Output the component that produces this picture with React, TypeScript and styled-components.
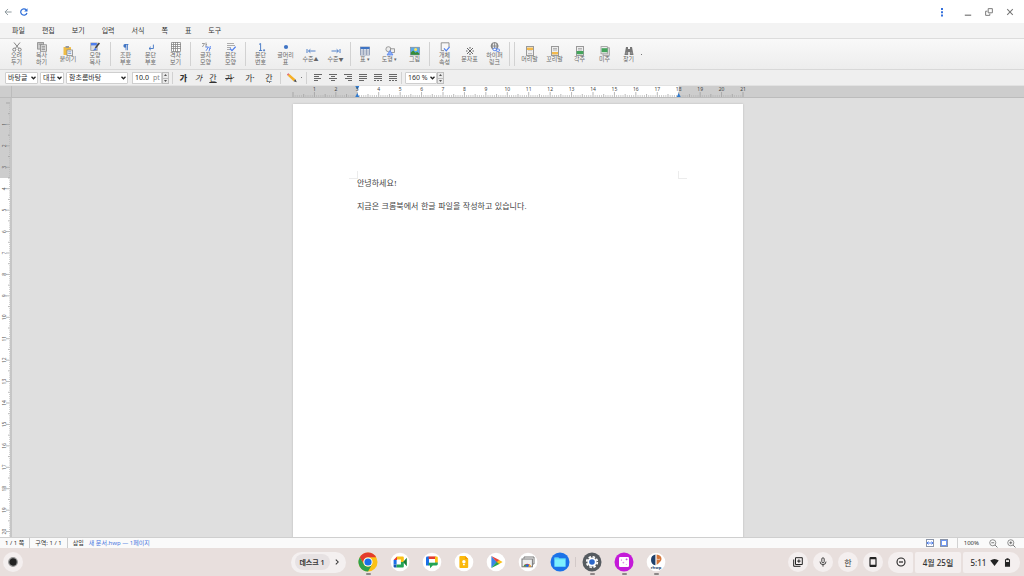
import React from 'react';
import styled, { createGlobalStyle, css } from 'styled-components';

const GlobalStyle = createGlobalStyle`
  * { box-sizing: border-box; }
  body { margin: 0; background: #dfdfdf; }
  button, input, select { font: inherit; color: inherit; margin: 0; }
  button { border: 0; padding: 0; background: none; cursor: pointer; }
  svg { display: block; flex: none; }
`;

const Shell = styled.div`
  display: flex;
  flex-direction: column;
  height: 100vh;
  overflow: hidden;
  font-family: 'Noto Sans', 'Noto Sans CJK KR', sans-serif;
  font-size: 7px;
  color: #333;
`;

/* ---------- window frame ---------- */

const TitleBar = styled.header`
  display: flex;
  justify-content: space-between;
  align-items: center;
  height: 23px;
  flex: none;
  padding: 0 8px 0 2px;
  background: #fff;
`;

const TitleGroup = styled.div<{ $gap: number }>`
  display: flex;
  align-items: center;
  gap: ${(p) => p.$gap}px;
`;

const TitleButton = styled.button`
  display: grid;
  place-items: center;
  width: 12px;
  height: 12px;
`;

const WindowButtons = styled(TitleGroup)`
  margin-left: 5px;
`;

const MenuBar = styled.nav`
  display: flex;
  align-items: center;
  height: 16px;
  flex: none;
  padding-left: 4px;
  background: #f3f3f3;
  border-bottom: 1px solid #dcdcdc;
`;

const MenuItem = styled.button`
  padding: 0 8px;
  margin-right: 1px;
  line-height: 14px;
`;

/* ---------- main toolbar ---------- */

const ToolBar = styled.div`
  display: flex;
  align-items: center;
  height: 31px;
  flex: none;
  padding-left: 4px;
  background: linear-gradient(#f9f9f9, #ededed);
  border-bottom: 1px solid #d8d8d8;
`;

const ToolButton = styled.button<{ $width?: number }>`
  display: flex;
  flex-direction: column;
  align-items: center;
  width: ${(p) => p.$width ?? 25}px;
  font-size: 6px;
  line-height: 7px;
  color: #666;
  white-space: pre;
`;

const Marker = styled.span`
  font-size: 5px;
`;

const Separator = styled.i<{ $height?: number; $gap?: number }>`
  width: 1px;
  height: ${(p) => p.$height ?? 24}px;
  margin: 0 ${(p) => p.$gap ?? 2}px;
  background: #d2d2d2;
  flex: none;
`;

const Dot = styled.i`
  width: 1px;
  height: 1px;
  margin: 0 1px;
  background: #777;
`;

/* ---------- format bar ---------- */

const FormatBar = styled.div`
  display: flex;
  align-items: center;
  height: 16px;
  flex: none;
  padding-left: 5px;
  background: #efefef;
  border-bottom: 1px solid #e2e2e2;
`;

const SelectWrap = styled.label<{ $width: number }>`
  position: relative;
  width: ${(p) => p.$width}px;
  height: 12px;
  margin-right: 2px;
  & > svg {
    position: absolute;
    right: 2px;
    top: 4px;
    pointer-events: none;
  }
`;

const Select = styled.select`
  appearance: none;
  display: block;
  width: 100%;
  height: 12px;
  padding: 0 2px;
  border: 1px solid #cfcfcf;
  border-radius: 1px;
  background: #fff;
  line-height: 10px;
`;

const SizeField = styled.label`
  display: flex;
  align-items: center;
  width: 30px;
  height: 12px;
  margin-left: 2px;
  border: 1px solid #cfcfcf;
  background: #fff;
  color: #888;
`;

const SizeInput = styled.input`
  width: 20px;
  height: 10px;
  padding: 0 0 0 2px;
  border: 0;
  background: none;
  color: #222;
`;

const Stepper = styled.div`
  display: flex;
  flex-direction: column;
  width: 7px;
  height: 12px;
  border: 1px solid #bdbdbd;
  background: #e9e9e9;
`;

const Step = styled.button`
  display: grid;
  place-items: center;
  height: 5px;
  & + & { border-top: 1px solid #bdbdbd; }
`;

const CharButton = styled.button<{ $width: number; $look?: 'bold' | 'italic' | 'underline' }>`
  width: ${(p) => p.$width}px;
  font-size: 8px;
  line-height: 12px;
  ${(p) => p.$look === 'bold' && css`font-weight: 800;`}
  ${(p) => p.$look === 'italic' && css`font-style: italic;`}
  ${(p) => p.$look === 'underline' && css`text-decoration: underline;`}
`;

const DottedChar = styled(CharButton)`
  display: flex;
  flex-direction: column;
  align-items: center;
  line-height: 9px;
`;

const IconButton = styled.button<{ $width?: number }>`
  display: grid;
  place-items: center;
  width: ${(p) => p.$width ?? 15}px;
  height: 12px;
`;

/* ---------- rulers and document ---------- */

const RulerRow = styled.div`
  display: flex;
  height: 12px;
  flex: none;
  background: #cdcdcd;
  border-bottom: 1px solid #bcbcbc;
`;

const RulerCorner = styled.div`
  width: 12px;
  border-right: 1px solid #bcbcbc;
`;

const RulerTrack = styled.div`
  display: flex;
  justify-content: center;
  flex: 1;
`;

const Workspace = styled.main`
  display: flex;
  flex: 1;
  min-height: 0;
`;

const SideRuler = styled.div`
  width: 12px;
  flex: none;
  overflow: hidden;
  background: #fff;
  border-right: 2px solid #c6c6c6;
`;

const Canvas = styled.div`
  flex: 1;
  display: flex;
  justify-content: center;
  align-items: flex-start;
  overflow: hidden;
  padding-top: 6px;
  background: #dfdfdf;
`;

const Page = styled.article`
  width: 450px;
  min-height: 636px;
  flex: none;
  padding-top: 67px;
  background: #fff;
  box-shadow: 0 0 2px #b8b8b8;
`;

const MarginMarks = styled.div`
  display: flex;
  justify-content: space-between;
  padding: 0 56px;
`;

const Mark = styled.i<{ $side: 'left' | 'right' }>`
  width: 9px;
  height: 8px;
  border-bottom: 1px solid #ececec;
  border-${(p) => (p.$side === 'left' ? 'right' : 'left')}: 1px solid #ececec;
`;

const Body = styled.div`
  padding: 0 64px;
  font-family: 'DejaVu Serif', 'Noto Sans CJK KR', serif;
  font-size: 8px;
  color: #444;
`;

const Paragraph = styled.p`
  margin: 0 0 14px;
  line-height: 9px;
`;

/* ---------- status bar ---------- */

const StatusBar = styled.footer`
  display: flex;
  align-items: center;
  height: 11px;
  flex: none;
  background: #fafafa;
  border-top: 1px solid #cfcfcf;
  font-size: 6px;
  line-height: 10px;
`;

const StatusCell = styled.span<{ $divided?: boolean }>`
  padding: 0 5px;
  border-right: ${(p) => (p.$divided ? '1px solid #ccc' : '0')};
`;

const FileLink = styled.a`
  color: #4a78e0;
  text-decoration: none;
`;

const ViewControls = styled.div`
  display: flex;
  align-items: center;
  margin-left: auto;
  padding-right: 4px;
`;

const ZoomValue = styled.span`
  margin-right: 5px;
`;

/* ---------- shelf ---------- */

const Shelf = styled.div`
  display: grid;
  grid-template-columns: 1fr auto 1fr;
  align-items: center;
  height: 28px;
  flex: none;
  padding: 0 4px 0 3px;
  background: #e8dfdd;
`;

const ShelfSide = styled.div`
  display: flex;
  justify-content: space-between;
  align-items: center;
  padding-right: 12px;
`;

const RoundButton = styled.button`
  display: grid;
  place-items: center;
  width: 20px;
  height: 20px;
  border-radius: 10px;
  background: #f4efef;
  font-size: 8px;
`;

const DeskPill = styled.div`
  display: flex;
  align-items: center;
  width: 55px;
  height: 21px;
  padding-left: 4px;
  border-radius: 11px;
  background: #f4f0f0;
`;

const DeskName = styled.button`
  width: 35px;
  height: 16px;
  border-radius: 8px;
  background: #e7e2e3;
  font-weight: 600;
`;

const Apps = styled.div`
  display: flex;
  align-items: center;
  gap: 12px;
`;

const AppButton = styled.button<{ $running?: boolean; $divided?: boolean }>`
  position: relative;
  width: 20px;
  height: 20px;
  ${(p) =>
    p.$divided &&
    css`
      &::before {
        content: '';
        position: absolute;
        left: -7px;
        top: 5px;
        width: 1px;
        height: 10px;
        background: #d3cac9;
      }
    `}
  ${(p) =>
    p.$running &&
    css`
      &::after {
        content: '';
        position: absolute;
        left: 8px;
        top: 21px;
        width: 5px;
        height: 2px;
        border-radius: 1px;
        background: #8d8787;
      }
    `}
`;

const Tray = styled.div`
  display: flex;
  align-items: center;
  justify-content: flex-end;
`;

const TrayIcons = styled.div`
  display: flex;
  gap: 5px;
  margin-right: 3px;
`;

const TrayPill = styled.button<{ $width: number; $shape: 'start' | 'middle' | 'end' }>`
  display: flex;
  align-items: center;
  justify-content: center;
  gap: 4px;
  width: ${(p) => p.$width}px;
  height: 21px;
  margin-left: 2px;
  background: #f4efef;
  font-size: 8px;
  font-weight: 500;
  border-radius: ${(p) =>
    p.$shape === 'start' ? '10px 2px 2px 10px' : p.$shape === 'end' ? '2px 10px 10px 2px' : '2px'};
`;

/* ---------- drawings ---------- */

const Svg = ({ s = 10, children, box = 10 }: { s?: number; box?: number; children: React.ReactNode }) => (
  <svg width={s} height={s} viewBox={`0 0 ${box} ${box}`} fill="none" stroke="none" aria-hidden="true">
    {children}
  </svg>
);

const G = '#777';
const B = '#3f74c4';

const pageGlyph = (band: React.ReactNode) => (
  <>
    <rect x="1.5" y=".5" width="7" height="9" fill="#eee" stroke="#999" />
    <path d="M3 2.5h4M3 4h4M3 7.7h4" stroke="#999" strokeWidth=".7" />
    {band}
  </>
);

const icons: Record<string, React.ReactNode> = {
  cut: (
    <g stroke={G} strokeWidth=".9">
      <path d="M2 .5l4.8 6M8 .5L3.2 6.5" />
      <circle cx="2.3" cy="7.6" r="1.5" />
      <circle cx="7.7" cy="7.6" r="1.5" />
    </g>
  ),
  copy: (
    <g stroke="#888" strokeWidth=".8">
      <rect x=".6" y=".6" width="6" height="6.5" fill="#ccc" />
      <rect x="3.4" y="2.8" width="6" height="6.5" fill="#e4e4e4" />
      <path d="M4.6 4.6h3.6M4.6 6h3.6M4.6 7.5h3.6M1.6 2.2h4" />
    </g>
  ),
  paste: (
    <>
      <rect x=".5" y="1" width="7.5" height="8" rx=".6" fill="#f0bd45" />
      <rect x="2.5" y="0" width="3.5" height="2" fill="#999" />
      <rect x="4" y="4" width="5.4" height="5.6" fill="#f2f2f2" stroke="#888" strokeWidth=".8" />
      <path d="M5.2 5.8h3M5.2 7.5h3" stroke={B} strokeWidth=".6" />
    </>
  ),
  shape: (
    <>
      <rect x=".8" y="1" width="6.4" height="7.5" fill="#ddd" stroke="#999" strokeWidth=".8" />
      <rect x="1" y="1" width="5.8" height="2.4" fill="#4d7eee" />
      <path d="M9.4 1L5.4 6" stroke="#444" strokeWidth="1.6" />
      <path d="M5.4 5.6l-2.6 3.2 4-1z" fill="#4b7ef0" />
    </>
  ),
  pilcrow: <path d="M3.8 2h3.6v.8h-.6v5.4H6V2.8h-.6v5.4h-.8V5.6a1.8 1.8 0 0 1-.8-3.6z" fill={B} />,
  enter: <path d="M7.4 2.6v3.9H3.2M4.8 4.8L3 6.5l1.8 1.6" stroke={B} strokeWidth=".9" />,
  grid: (
    <>
      <rect x=".5" y=".5" width="9" height="9" fill="#fff" />
      <path
        d="M.5 .5h9v9h-9zM2.500 0v10M4.500 0v10M6.500 0v10M0 2.500h10M0 4.500h10M0 6.500h10"
        stroke="#888"
        strokeWidth=".8"
      />
    </>
  ),
  charshape: (
    <>
      <path d="M1 1.5h2.6L1.4 5M5 .5v4.8M5 2.6h1" stroke="#888" strokeWidth=".8" />
      <path d="M4.5 5h3L5 8.8M9.4 4L8 9.4M8.8 6.4h1" stroke="#4d7eee" strokeWidth=".9" />
    </>
  ),
  parashape: (
    <>
      <path d="M1 1.5h7M1 3.5h8M1 5.5h4M1 7.5h3" stroke="#999" strokeWidth=".8" />
      <path d="M4 6.5l2 2.2 3.6-4" stroke="#4d7eee" strokeWidth="1.2" />
    </>
  ),
  paranum: <path d="M3 2.4L4.6 1.5v7M3 8.5h3.2M7.6 7.8h1v1h-1z" stroke={B} strokeWidth=".9" />,
  bullet: <circle cx="5" cy="5" r="2.1" fill={B} />,
  outdent: <path d="M9.5 5H2.6M4.4 3.3L2.5 5l1.9 1.7M1 3v4" stroke={B} strokeWidth=".9" />,
  indent: <path d="M.5 5h6.9M5.6 3.3L7.5 5 5.6 6.7M9 3v4" stroke={B} strokeWidth=".9" />,
  table: (
    <>
      <rect x=".5" y="1" width="9" height="8" fill="#f6f6f6" stroke="#8794b0" strokeWidth=".8" />
      <rect x=".5" y="1" width="9" height="2.2" fill={B} />
      <path d="M3.4 3v6M6.6 3v6M.5 5h9M.5 7h9" stroke="#8794b0" strokeWidth=".8" />
    </>
  ),
  draw: (
    <>
      <circle cx="3.4" cy="3.2" r="2.5" fill="#ececec" stroke="#888" strokeWidth=".8" />
      <rect x="5.4" y="2.8" width="4" height="3.6" fill="#eee" stroke="#888" strokeWidth=".8" />
      <path d="M5 4.6L8 9H2z" fill="#8eb0f8" stroke="#4d7eee" strokeWidth=".7" />
    </>
  ),
  picture: (
    <>
      <rect x=".4" y="1.2" width="9.2" height="7.8" fill="#59a9ea" stroke="#888" strokeWidth=".6" />
      <circle cx="5.6" cy="3.6" r="1.5" fill="#ffe15a" />
      <path d="M.8 8.7V6.4l2.4-1.9 2.4 2.2 1.5-1 2.1 1.7v1.3z" fill="#398c35" />
    </>
  ),
  props: (
    <>
      <path d="M9 5V.8H1.2v7.8H4" fill="#f7f7f7" stroke="#888" strokeWidth=".9" />
      <path d="M4 6.3l2.2 2.5 3.4-4" stroke="#4d7eee" strokeWidth="1.2" />
    </>
  ),
  symbol: (
    <>
      <path d="M2 2l6 6M8 2L2 8" stroke="#555" strokeWidth=".9" />
      <path d="M4.4 1.2h1.2v1.2H4.4zM4.4 7.6h1.2v1.2H4.4zM1.2 4.4h1.2v1.2H1.2zM7.6 4.4h1.2v1.2H7.6z" fill="#444" />
    </>
  ),
  link: (
    <>
      <circle cx="4.6" cy="4" r="3.5" fill="#eee" stroke="#777" strokeWidth=".9" />
      <path d="M1 4h7M4.6.5v7M2.7 1.4q-1.5 2.6 0 5.2M6.5 1.4q1.5 2.6 0 5.2" stroke="#777" strokeWidth=".8" />
      <rect x="3" y="6.2" width="3.6" height="2.4" rx="1.2" stroke="#4d7eee" fill="#fff" strokeWidth=".9" />
      <rect x="6" y="7" width="3.6" height="2.4" rx="1.2" stroke="#4d7eee" strokeWidth=".9" />
    </>
  ),
  header: pageGlyph(<rect x="2" y="1.6" width="6" height="2.4" fill="#f3b94c" />),
  footer: pageGlyph(<rect x="2" y="6" width="6" height="2.4" fill="#f3b94c" />),
  footnote: pageGlyph(<rect x="1.6" y="5" width="6.8" height="3.2" fill="#45a45c" />),
  endnote: (
    <>
      <rect x="3" y="1.8" width="6.3" height="7.6" fill="#ddd" stroke="#999" strokeWidth=".8" />
      <rect x="1" y=".6" width="6.3" height="7.2" fill="#eee" stroke="#999" strokeWidth=".8" />
      <rect x="1.6" y="2.2" width="6" height="4" fill="#45a45c" />
    </>
  ),
  find: (
    <>
      <path d="M2 1h2v2h2V1h2l1.5 8H5.8V6H4.2v3H.5z" fill="#777" />
      <path d="M1.5 7h2M6.5 7h2" stroke="#bbb" strokeWidth=".7" />
    </>
  ),
};

const Chevron = () => (
  <svg width="5" height="4" viewBox="0 0 5 4" fill="none" aria-hidden="true">
    <path d="M.5 .8L2.5 2.8 4.5 .8" stroke="#222" strokeWidth="1.3" />
  </svg>
);

const StepArrow = ({ up }: { up?: boolean }) => (
  <svg width="3" height="2" viewBox="0 0 3 2" aria-hidden="true">
    <path d={up ? 'M0 2L1.5 0 3 2z' : 'M0 0h3L1.5 2z'} fill="#555" />
  </svg>
);

const alignments: { label: string; lines: [number, number][] }[] = [
  { label: '왼쪽 정렬', lines: [[0, 8], [0, 5], [0, 7], [0, 4]] },
  { label: '가운데 정렬', lines: [[0, 8], [2, 6], [0, 8], [2, 6]] },
  { label: '오른쪽 정렬', lines: [[0, 8], [3, 8], [1, 8], [4, 8]] },
  { label: '양쪽 정렬', lines: [[0, 8], [0, 8], [0, 8], [0, 5]] },
  { label: '배분 정렬', lines: [[0, 8], [0, 8], [0, 8], [0, 8]] },
  { label: '나눔 정렬', lines: [[0, 8], [0, 8], [0, 8], [0, 8]] },
];

const AlignIcon = ({ lines, broken }: { lines: [number, number][]; broken: boolean }) => (
  <Svg s={8} box={8}>
    {lines.map(([a, b], i) => (
      <path
        key={i}
        d={`M${a} ${i * 2 + 0.5}H${b}`}
        stroke="#666"
        strokeWidth="1"
        strokeDasharray={broken && i === 3 ? '2 1' : undefined}
      />
    ))}
  </Svg>
);

/* ---------- rulers ---------- */

const PAGE_WIDTH = 450;
const CM = PAGE_WIDTH / 21;

const tickLength = (i: number) => (i % 10 === 0 ? 5 : i % 5 === 0 ? 3 : 2);

const HorizontalRuler = () => (
  <svg width={PAGE_WIDTH} height="11" overflow="visible" aria-hidden="true">
    <rect x={3 * CM} y="0" width={15 * CM} height="11" fill="#fff" />
    {Array.from({ length: 211 }, (_, i) => (
      <path key={i} d={`M${(i * CM) / 10} 11v-${tickLength(i)}`} stroke={i % 5 ? '#b4b4b4' : '#999'} strokeWidth=".7" />
    ))}
    <path d={`M${3 * CM - 2} 0h4L${3 * CM} 4zM${3 * CM - 2} 11h4L${3 * CM} 7z`} fill="#2f7bd0" />
    <path d={`M${18 * CM - 2} 11h4L${18 * CM} 7z`} fill="#2f7bd0" />
    {Array.from({ length: 21 }, (_, i) => (
      <text key={i} x={(i + 1) * CM} y="5" textAnchor="middle" fontSize="5" fill="#444">
        {i + 1}
      </text>
    ))}
  </svg>
);

const SIDE_RULER_CM = 20;

const VerticalRuler = () => (
  <svg width="10" height="439" aria-hidden="true">
    <rect x="0" y="0" width="10" height="80" fill="#cdcdcd" />
    {Array.from({ length: SIDE_RULER_CM * 10 + 3 }, (_, i) => (
      <path key={i} d={`M10 ${5 + (i * CM) / 10}h-${tickLength(i) - 1}`} stroke={i % 5 ? '#b4b4b4' : '#999'} strokeWidth=".7" />
    ))}
    {Array.from({ length: SIDE_RULER_CM }, (_, i) => (
      <text
        key={i}
        transform={`translate(6 ${5 + (i + 1) * CM}) rotate(-90)`}
        textAnchor="middle"
        fontSize="5"
        fill="#555"
      >
        {i + 1}
      </text>
    ))}
  </svg>
);

/* ---------- shelf apps ---------- */

const White = () => <circle cx="10" cy="10" r="9.3" fill="#fff" />;

const apps: { name: string; running?: boolean; divided?: boolean; art: React.ReactNode }[] = [
  {
    name: 'Chrome',
    running: true,
    art: (
      <>
        <circle cx="10" cy="10" r="9.5" fill="#fbc116" />
        <path d="M1.77 5.25A9.5 9.5 0 0 1 18.23 5.25H10A4.75 4.75 0 0 0 5.9 12.4z" fill="#e33b2e" />
        <path d="M1.77 5.25A9.5 9.5 0 0 0 10 19.5L14.1 12.4A4.75 4.75 0 0 1 5.9 12.4z" fill="#2da14c" />
        <circle cx="10" cy="10" r="4.6" fill="#fff" />
        <circle cx="10" cy="10" r="3.6" fill="#1a6fe8" />
      </>
    ),
  },
  {
    name: 'Meet',
    art: (
      <>
        <White />
        <path d="M3.6 8L7 4.6V8z" fill="#e33b2e" />
        <path d="M3.6 8h3v4.4h-3z" fill="#1a6fe8" />
        <path d="M3.6 12.4h3v3h-2a1 1 0 0 1-1-1z" fill="#1557b8" />
        <path d="M7 4.6h5.8a1 1 0 0 1 1 1V10h-2.9V7.6H7z" fill="#fbc116" />
        <path d="M6.6 12.4h4.3V10h2.9v4.4a1 1 0 0 1-1 1H6.6z" fill="#23a455" />
        <path d="M13 10l3.8-4.2v8.400z" fill="#168038" />
      </>
    ),
  },
  {
    name: 'Chat',
    art: (
      <>
        <White />
        <path d="M4 5.800A1.400 1.400 0 0 1 5.400 4.400H7v9H4z" fill="#1a6fe8" />
        <path d="M6.600 4.400h7V7h-7z" fill="#e33b2e" />
        <path d="M13 4.400h1.400a1.400 1.400 0 0 1 1.400 1.400v5H13z" fill="#fbc116" />
        <path d="M6.600 10.400h9.200V12a1.400 1.400 0 0 1-1.400 1.400h-3.600L8 16.200v-2.800H6.600z" fill="#23a455" />
        <path d="M7 7h6v3.400H7z" fill="#fff" />
      </>
    ),
  },
  {
    name: 'Keep',
    art: (
      <>
        <White />
        <path d="M6.4 4h4.8l3 3v8a1 1 0 0 1-1 1H6.4a1 1 0 0 1-1-1V5a1 1 0 0 1 1-1z" fill="#fbb90d" />
        <path d="M11.2 4l3 3h-3z" fill="#f29900" />
        <circle cx="9.9" cy="9.8" r="1.7" fill="#fff" />
        <path d="M9 12h1.8v1.2H9z" fill="#fff" />
      </>
    ),
  },
  {
    name: 'Play 스토어',
    art: (
      <>
        <White />
        <path d="M5.4 4v12L11 10z" fill="#3a86e8" />
        <path d="M5.4 4l8.4 4.200L11 10.400z" fill="#e8453c" />
        <path d="M5.4 16l8.4-4.200L11 9.600z" fill="#23a455" />
        <path d="M13.2 7.900L16.600 10l-3.400 2.100L10.800 10z" fill="#fbc116" />
      </>
    ),
  },
  {
    name: '갤러리',
    art: (
      <>
        <White />
        <path d="M6 6.5V5h10v7h-1.5" stroke="#777" fill="none" />
        <rect x="4" y="7" width="10.4" height="7.8" fill="#eee" stroke="#777" />
        <path d="M5.5 14.4a4 4 0 0 1 7.6 0z" fill="#e33b2e" />
        <path d="M5.6 14.4a4 4 0 0 1 1.5-2.2l1.4 2.2z" fill="#23a455" />
        <path d="M13 14.4a4 4 0 0 0-1.5-2.2l-1.4 2.2z" fill="#fbc116" />
        <circle cx="9.3" cy="13.6" r="1.4" fill="#1a6fe8" />
      </>
    ),
  },
  {
    name: '파일',
    art: (
      <>
        <circle cx="10" cy="10" r="9.5" fill="#1b72e8" />
        <path d="M4.4 5.4h4l1.2 1.2h6v8.2H4.4z" fill="#7ef0ff" />
        <path d="M4.4 6.8h11.2" stroke="#46c9ee" strokeWidth=".8" />
      </>
    ),
  },
  {
    name: '설정',
    running: true,
    divided: true,
    art: (
      <>
        <circle cx="10" cy="10" r="9.5" fill="#565b60" />
        <circle cx="10" cy="10" r="5.3" fill="none" stroke="#fff" strokeWidth="1.7" strokeDasharray="2.5 1.66" />
        <circle cx="10" cy="10" r="4.6" fill="#fff" />
        <circle cx="10" cy="10" r="2.8" fill="#2c67c9" />
      </>
    ),
  },
  {
    name: '화면 캡처',
    running: true,
    art: (
      <>
        <circle cx="10" cy="10" r="9.5" fill="#c41ad8" />
        <rect x="5" y="5" width="10" height="10" rx="1.2" fill="#fff" />
        <path d="M12.6 6.4v2M11.6 7.4h2" stroke="#c41ad8" strokeWidth=".6" />
        <circle cx="7.4" cy="8" r=".5" fill="#c41ad8" />
        <circle cx="9.4" cy="10.6" r=".9" fill="#e08be8" />
        <circle cx="12.2" cy="12.4" r=".4" fill="#c41ad8" />
      </>
    ),
  },
  {
    name: 'rhwp',
    running: true,
    art: (
      <>
        <White />
        <path d="M9.4 2.6v10.6a5.4 5.4 0 0 1 0-10.6z" fill="#20406b" />
        <path d="M10.6 2.4c6 1 6 5.4 2.8 8.2-1 1-1.4 1.8-2.8 2.2z" fill="#d4763b" />
        <path d="M10.4 7q2 1 3.6.2" stroke="#fff" strokeWidth=".6" fill="none" />
        <text x="10" y="17" textAnchor="middle" fontSize="4" fontWeight="700" fill="#20406b">rhwp</text>
      </>
    ),
  },
];

/* ---------- data ---------- */

const menus = ['파일', '편집', '보기', '입력', '서식', '쪽', '표', '도구'];

type Tool = { icon: string; label: string; marker?: string; width?: number };

const toolGroups: Tool[][] = [
  [
    { icon: 'cut', label: '오려\n두기' },
    { icon: 'copy', label: '복사\n하기' },
    { icon: 'paste', label: '붙이기', width: 28 },
    { icon: 'shape', label: '모양\n복사', width: 26 },
  ],
  [
    { icon: 'pilcrow', label: '조판\n부호' },
    { icon: 'enter', label: '문단\n부호' },
    { icon: 'grid', label: '격자\n보기' },
  ],
  [
    { icon: 'charshape', label: '글자\n모양' },
    { icon: 'parashape', label: '문단\n모양' },
  ],
  [
    { icon: 'paranum', label: '문단\n번호' },
    { icon: 'bullet', label: '글머리\n표' },
    { icon: 'outdent', label: '수준', marker: '▲' },
    { icon: 'indent', label: '수준', marker: '▼' },
  ],
  [
    { icon: 'table', label: '표', marker: ' ▾', width: 24 },
    { icon: 'draw', label: '도형', marker: ' ▾' },
    { icon: 'picture', label: '그림' },
  ],
  [
    { icon: 'props', label: '개체\n속성' },
    { icon: 'symbol', label: '문자표' },
    { icon: 'link', label: '하이퍼\n링크' },
  ],
  [],
  [
    { icon: 'header', label: '머리말' },
    { icon: 'footer', label: '꼬리말' },
    { icon: 'footnote', label: '각주' },
    { icon: 'endnote', label: '미주' },
    { icon: 'find', label: '찾기', width: 23 },
  ],
];

const Picker = ({ width, value, label }: { width: number; value: string; label: string }) => (
  <SelectWrap $width={width}>
    <Select aria-label={label} defaultValue={value}>
      <option>{value}</option>
    </Select>
    <Chevron />
  </SelectWrap>
);

const Spinner = ({ label }: { label: string }) => (
  <Stepper>
    <Step aria-label={`${label} 늘리기`}><StepArrow up /></Step>
    <Step aria-label={`${label} 줄이기`}><StepArrow /></Step>
  </Stepper>
);

const LineSpacing = styled.div`
  display: flex;
  margin-left: 2px;
  & > label { margin-right: 0; }
`;

export default function App() {
  return (
    <Shell lang="ko">
      <GlobalStyle />
      <TitleBar>
        <TitleGroup $gap={4}>
          <TitleButton aria-label="뒤로">
            <Svg s={8}><path d="M9.5 5H1.5M5 1.2L1.2 5 5 8.8" stroke="#8b969c" strokeWidth="1.2" /></Svg>
          </TitleButton>
          <TitleButton aria-label="새로고침">
            <Svg s={8}>
              <path d="M8.7 6.3A4 4 0 1 1 7.8 2.2" stroke="#2b6cd8" strokeWidth="1.5" />
              <path d="M9.4.2v4.200H5.200z" fill="#2b6cd8" />
            </Svg>
          </TitleButton>
        </TitleGroup>
        <TitleGroup $gap={9}>
          <TitleButton aria-label="더보기">
            <Svg><path d="M4 1h2v2H4zM4 4.200h2v2H4zM4 7.400h2v2H4z" fill="#3470dc" /></Svg>
          </TitleButton>
          <WindowButtons $gap={9}>
            <TitleButton aria-label="최소화"><Svg s={8}><path d="M1 9h8" stroke="#777" strokeWidth="1.5" /></Svg></TitleButton>
            <TitleButton aria-label="창 모드">
              <Svg s={8}><path d="M4 .8h5.200V6H4zM3 4H.8v5.200H6V7" stroke="#777" strokeWidth="1.2" /></Svg>
            </TitleButton>
            <TitleButton aria-label="닫기"><Svg s={8}><path d="M1.5 1.5l7 7M8.5 1.5l-7 7" stroke="#777" strokeWidth="1.3" /></Svg></TitleButton>
          </WindowButtons>
        </TitleGroup>
      </TitleBar>

      <MenuBar>
        {menus.map((m) => <MenuItem key={m}>{m}</MenuItem>)}
      </MenuBar>

      <ToolBar>
        {toolGroups.map((group, gi) => (
          <React.Fragment key={gi}>
            {gi > 0 && <Separator />}
            {group.map((t) => (
              <ToolButton key={t.icon} $width={t.width}>
                <Svg>{icons[t.icon]}</Svg>
                <span>{t.label}{t.marker && <Marker>{t.marker}</Marker>}</span>
              </ToolButton>
            ))}
          </React.Fragment>
        ))}
        <Dot />
      </ToolBar>

      <FormatBar>
        <Picker width={33} value="바탕글" label="스타일" />
        <Picker width={24} value="대표" label="언어" />
        <Picker width={62} value="함초롬바탕" label="글꼴" />
        <SizeField>
          <SizeInput aria-label="글자 크기" defaultValue="10.0" />
          pt
        </SizeField>
        <Spinner label="글자 크기" />
        <Separator $height={12} $gap={3} />
        <CharButton $width={15} $look="bold">가</CharButton>
        <CharButton $width={15} $look="italic">가</CharButton>
        <CharButton $width={14} $look="underline">간</CharButton>
        <CharButton $width={20}><s>가</s>·</CharButton>
        <CharButton $width={20}>가·</CharButton>
        <DottedChar $width={18}>간<Dot /></DottedChar>
        <Separator $height={12} $gap={2} />
        <IconButton $width={17} aria-label="형광펜">
          <Svg>
            <path d="M2.4 1l6 5.2-1.8 2L.8 2.8z" fill="#f5b027" />
            <path d="M2.4 1L.8 2.8 0 1.6 1.2.2z" fill="#e0606a" />
            <path d="M8.4 6.2l1.4 3-3.2-1z" fill="#444" />
          </Svg>
        </IconButton>
        <Dot />
        <Separator $height={12} $gap={3} />
        {alignments.map((a, i) => (
          <IconButton key={a.label} aria-label={a.label}><AlignIcon lines={a.lines} broken={i > 3} /></IconButton>
        ))}
        <Separator $height={12} $gap={1} />
        <LineSpacing>
          <Picker width={32} value="160 %" label="줄 간격" />
          <Spinner label="줄 간격" />
        </LineSpacing>
      </FormatBar>

      <RulerRow>
        <RulerCorner />
        <RulerTrack><HorizontalRuler /></RulerTrack>
      </RulerRow>

      <Workspace>
        <SideRuler><VerticalRuler /></SideRuler>
        <Canvas>
          <Page>
            <MarginMarks><Mark $side="left" /><Mark $side="right" /></MarginMarks>
            <Body>
              <Paragraph>안녕하세요!</Paragraph>
              <Paragraph>지금은 크롬북에서 한글 파일을 작성하고 있습니다.</Paragraph>
            </Body>
          </Page>
        </Canvas>
      </Workspace>

      <StatusBar>
        <StatusCell $divided>1 / 1 쪽</StatusCell>
        <StatusCell $divided>구역: 1 / 1</StatusCell>
        <StatusCell>삽입</StatusCell>
        <FileLink href="#">새 문서.hwp — 1페이지</FileLink>
        <ViewControls>
          <IconButton $width={14} aria-label="폭 맞춤">
            <Svg s={8} box={8}>
              <rect x=".5" y=".5" width="7" height="7" fill="#fff" stroke="#8b95a8" />
              <path d="M1 4h6M2.5 2.6L1 4l1.500 1.400M5.500 2.600L7 4 5.500 5.400" stroke="#4d7eee" />
            </Svg>
          </IconButton>
          <IconButton $width={14} aria-label="쪽 맞춤">
            <Svg s={8} box={8}>
              <rect x=".5" y=".5" width="7" height="7" fill="#dfe8ff" stroke="#8b95a8" />
              <rect x="1.5" y="1.5" width="5" height="5" fill="#fff" stroke="#6f97f3" />
            </Svg>
          </IconButton>
          <Separator $height={10} $gap={6} />
          <ZoomValue>100%</ZoomValue>
          {[false, true].map((plus) => (
            <IconButton key={String(plus)} $width={18} aria-label={plus ? '확대' : '축소'}>
              <Svg s={9}>
                <circle cx="4.2" cy="4.2" r="3.4" stroke="#666" strokeWidth=".8" />
                <path d={`M6.8 6.8l2.6 2.6M2.6 4.2h3.2${plus ? 'M4.2 2.6v3.2' : ''}`} stroke="#555" strokeWidth=".9" />
              </Svg>
            </IconButton>
          ))}
        </ViewControls>
      </StatusBar>

      <Shelf>
        <ShelfSide>
          <RoundButton aria-label="런처">
            <Svg><circle cx="5" cy="5" r="4.3" fill="#222" stroke="#999" strokeWidth="1.2" /></Svg>
          </RoundButton>
          <DeskPill>
            <DeskName>데스크 1</DeskName>
            <IconButton aria-label="다음 데스크">
              <Svg s={6}><path d="M3 1l4 4-4 4" stroke="#333" strokeWidth="1.7" /></Svg>
            </IconButton>
          </DeskPill>
        </ShelfSide>
        <Apps>
          {apps.map((a) => (
            <AppButton key={a.name} $running={a.running} $divided={a.divided} aria-label={a.name}>
              <Svg s={20} box={20}>{a.art}</Svg>
            </AppButton>
          ))}
        </Apps>
        <Tray>
          <TrayIcons>
            <RoundButton aria-label="화면 캡처">
              <Svg><path d="M2.5.7h6.800v6.800H2.500zM.7 2.500v6.800h6.800M5.900 2.400v3.400M4.200 4.100h3.400" stroke="#222" /></Svg>
            </RoundButton>
            <RoundButton aria-label="마이크">
              <Svg>
                <rect x="3.8" y=".8" width="2.4" height="5" rx="1.2" stroke="#333" strokeWidth=".9" />
                <path d="M2 4.6a3 3 0 0 0 6 0M5 7.600v2" stroke="#333" strokeWidth=".9" />
              </Svg>
            </RoundButton>
            <RoundButton>한</RoundButton>
            <RoundButton aria-label="휴대전화">
              <Svg><rect x="2" y=".7" width="6" height="8.8" rx=".8" stroke="#222" strokeWidth="1.2" /><path d="M2 1.5h6M2 8.4h6" stroke="#222" strokeWidth="1.3" /></Svg>
            </RoundButton>
          </TrayIcons>
          <TrayPill $width={25} $shape="start" aria-label="방해 금지">
            <Svg><circle cx="5" cy="5" r="4" stroke="#222" strokeWidth="1.1" /><path d="M3 5h4" stroke="#222" strokeWidth="1.2" /></Svg>
          </TrayPill>
          <TrayPill $width={46} $shape="middle">4월 25일</TrayPill>
          <TrayPill $width={57} $shape="end">
            5:11
            <Svg s={9}><path d="M.3 2.8Q5-.8 9.7 2.800L5 9z" fill="#222" /></Svg>
            <Svg s={9}><path d="M3.8.3h2.400v1h1.600v8.400H2.200V1.300h1.600z" fill="#222" /><path d="M3.300 2.400h3.400v2H3.300z" fill="#f4efef" /></Svg>
          </TrayPill>
        </Tray>
      </Shelf>
    </Shell>
  );
}
